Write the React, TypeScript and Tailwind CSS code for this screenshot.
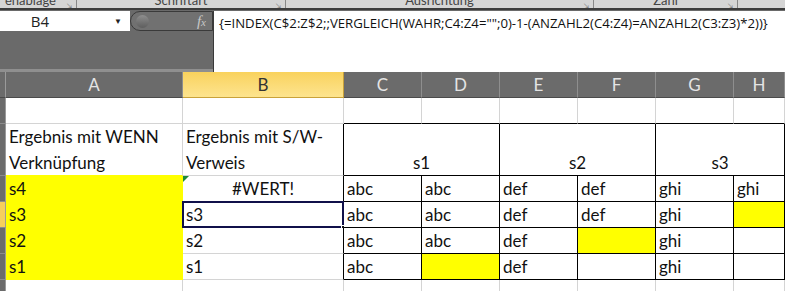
import React from "react";

const grid = "#d4d4d4";
const black = "#000000";
const yellow = "#ffff00";

type CellProps = {
  text?: string;
  right?: string;
  bottom?: string;
  bg?: string;
  center?: boolean;
  span?: boolean;
  multi?: boolean;
  children?: React.ReactNode;
};

const Cell = ({ text, right = grid, bottom = grid, bg = "#ffffff", center, span, multi, children }: CellProps) => (
  <div
    className={`relative flex items-end overflow-visible border-r border-b px-[3px] pb-[4px] ${span ? "col-span-2" : ""} ${center ? "justify-center" : ""}`}
    style={{ borderRightColor: right, borderBottomColor: bottom, backgroundColor: bg }}
  >
    {multi ? <div className="leading-[26px] -mb-[5px]">{children}</div> : <span className="leading-none whitespace-nowrap">{text}</span>}
    {!multi && children}
  </div>
);

const RowHead = ({ active }: { active?: boolean }) => (
  <div className={`border-r border-b border-r-[#9a9a9a] border-b-[#8c8c8c] ${active ? "bg-[#f6cf5c]" : "bg-[#6b6b6b]"}`} />
);

const ColHead = ({ label, active }: { label: string; active?: boolean }) => (
  <div
    className={`flex items-center justify-center border-r border-b text-[17px] ${
      active
        ? "bg-gradient-to-b from-[#f9d25c] to-[#fde48e] border-r-[#c9a23a] border-b-[#c9a23a] text-[#333333]"
        : "bg-[#6b6b6b] border-r-[#8e8e8e] border-b-[#4a4a4a] text-[#e4e4e4]"
    }`}
  >
    {label}
  </div>
);

export default function App() {
  return (
    <div className="w-[785px] h-[291px] overflow-hidden bg-[#6a6a6a] font-['Lato','Liberation_Sans',sans-serif]">
      {/* ribbon group labels, cut off at the top as in the screenshot */}
      <div className="flex h-[8px] overflow-hidden bg-[#d5d5d5] text-[13px] text-[#444] border-b-2 border-[#3c3c3c] box-content">
        <div className="relative w-[77px] border-r border-[#888] pl-[5px] -mt-[9px]">
          enablage<span className="absolute right-[4px] top-[9px] text-[7px] text-[#777]">↘</span>
        </div>
        <div className="relative w-[209px] border-r border-[#888] -mt-[9px] text-center">
          Schriftart<span className="absolute right-[4px] top-[9px] text-[7px] text-[#777]">↘</span>
        </div>
        <div className="relative w-[308px] border-r border-[#888] -mt-[9px] text-center">
          Ausrichtung<span className="absolute right-[4px] top-[9px] text-[7px] text-[#777]">↘</span>
        </div>
        <div className="relative w-[144px] border-r border-[#888] -mt-[9px] text-center">
          Zahl<span className="absolute right-[4px] top-[9px] text-[7px] text-[#777]">↘</span>
        </div>
        <div className="flex-1" />
      </div>

      {/* name box + formula bar */}
      <div className="flex h-[62px] pt-[1px] border-b-[3px] border-[#8f8f8f]">
        <div className="flex h-[20px] w-[130px] items-center bg-white font-['Open_Sans',sans-serif] text-[15px] text-[#222]">
          <span className="w-[80px] text-center">B4</span>
          <span className="ml-[34px] text-[8px] text-[#222]">▼</span>
        </div>
        <div className="relative flex h-[20px] w-[83px] items-center rounded-l-full border border-[#3a3a3a] bg-[#717171]">
          <div className="ml-[5px] h-[13px] w-[13px] rounded-full bg-gradient-to-b from-[#8e8e8e] to-[#5e5e5e]" />
          <span className="ml-auto mr-[6px] font-['Liberation_Serif',serif] italic text-[15px] text-[#c8c8c8]">
            f<span className="text-[11px]">x</span>
          </span>
        </div>
        <div className="flex-1 border-l border-[#3a3a3a] bg-white pl-[5px] pt-[3px] font-['Open_Sans',sans-serif] text-[13.2px] text-[#111] whitespace-nowrap h-[61px]">
          {'{=INDEX(C$2:Z$2;;VERGLEICH(WAHR;C4:Z4="";0)-1-(ANZAHL2(C4:Z4)=ANZAHL2(C3:Z3)*2))}'}
        </div>
      </div>

      {/* sheet */}
      <div className="grid grid-cols-[6px_177px_161px_78px_78px_78px_78px_78px_51px] grid-rows-[26px_26px_52px_26px_26px_26px_26px_26px_9px] text-[17px] text-[#111]">
        {/* column headers */}
        <div className="bg-[#6b6b6b] border-r border-b border-r-[#9a9a9a] border-b-[#4a4a4a]" />
        <ColHead label="A" />
        <ColHead label="B" active />
        <ColHead label="C" />
        <ColHead label="D" />
        <ColHead label="E" />
        <ColHead label="F" />
        <ColHead label="G" />
        <ColHead label="H" />

        {/* row 1 */}
        <RowHead />
        <Cell />
        <Cell />
        <Cell bottom={black} />
        <Cell bottom={black} />
        <Cell bottom={black} />
        <Cell bottom={black} />
        <Cell bottom={black} />
        <Cell bottom={black} />

        {/* row 2 */}
        <RowHead />
        <Cell bottom={yellow} multi>
          <div>Ergebnis mit WENN</div>
          <div>Verknüpfung</div>
        </Cell>
        <Cell right={black} multi>
          <div>Ergebnis mit S/W-</div>
          <div>Verweis</div>
        </Cell>
        <Cell text="s1" span center right={black} bottom={black} />
        <Cell text="s2" span center right={black} bottom={black} />
        <Cell text="s3" span center right={black} bottom={black} />

        {/* row 3 */}
        <RowHead />
        <Cell text="s4" bg={yellow} right={yellow} bottom={yellow} />
        <Cell text="#WERT!" center right={black}>
          <div className="absolute left-0 top-0 h-0 w-0 border-t-[6px] border-r-[6px] border-t-[#1d8a3c] border-r-transparent" />
        </Cell>
        <Cell text="abc" right={black} bottom={black} />
        <Cell text="abc" right={black} bottom={black} />
        <Cell text="def" right={black} bottom={black} />
        <Cell text="def" right={black} bottom={black} />
        <Cell text="ghi" right={black} bottom={black} />
        <Cell text="ghi" right={black} bottom={black} />

        {/* row 4 */}
        <RowHead active />
        <Cell text="s3" bg={yellow} right={yellow} bottom={yellow} />
        <Cell text="s3" right={black}>
          <div className="pointer-events-none absolute -left-[1px] -top-[1px] -right-[1px] -bottom-[1px] border-2 border-[#10104a]" />
          <div className="absolute -right-[4px] -bottom-[4px] h-[6px] w-[6px] border border-white bg-[#111]" />
        </Cell>
        <Cell text="abc" right={black} bottom={black} />
        <Cell text="abc" right={black} bottom={black} />
        <Cell text="def" right={black} bottom={black} />
        <Cell text="def" right={black} bottom={black} />
        <Cell text="ghi" right={black} bottom={black} />
        <Cell bg={yellow} right={black} bottom={black} />

        {/* row 5 */}
        <RowHead />
        <Cell text="s2" bg={yellow} right={yellow} bottom={yellow} />
        <Cell text="s2" right={black} />
        <Cell text="abc" right={black} bottom={black} />
        <Cell text="abc" right={black} bottom={black} />
        <Cell text="def" right={black} bottom={black} />
        <Cell bg={yellow} right={black} bottom={black} />
        <Cell text="ghi" right={black} bottom={black} />
        <Cell right={black} bottom={black} />

        {/* row 6 */}
        <RowHead />
        <Cell text="s1" bg={yellow} right={yellow} bottom={yellow} />
        <Cell text="s1" right={black} />
        <Cell text="abc" right={black} bottom={black} />
        <Cell bg={yellow} right={black} bottom={black} />
        <Cell text="def" right={black} bottom={black} />
        <Cell right={black} bottom={black} />
        <Cell text="ghi" right={black} bottom={black} />
        <Cell right={black} bottom={black} />

        {/* row 7 */}
        <RowHead />
        <Cell />
        <Cell />
        <Cell />
        <Cell />
        <Cell />
        <Cell />
        <Cell />
        <Cell />
      </div>
    </div>
  );
}
